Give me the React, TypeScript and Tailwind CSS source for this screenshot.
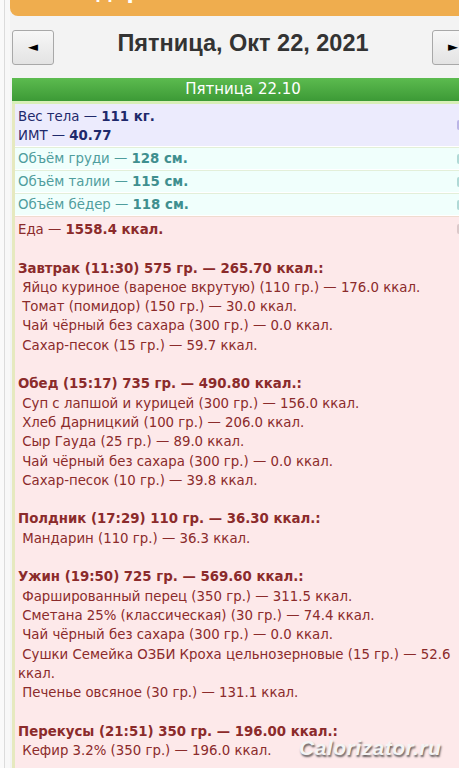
import React from "react";

type Meal = { title: string; items: string[] };

const meals: Meal[] = [
  {
    title: "Завтрак (11:30) 575 гр. — 265.70 ккал.:",
    items: [
      "Яйцо куриное (вареное вкрутую) (110 гр.) — 176.0 ккал.",
      "Томат (помидор) (150 гр.) — 30.0 ккал.",
      "Чай чёрный без сахара (300 гр.) — 0.0 ккал.",
      "Сахар-песок (15 гр.) — 59.7 ккал.",
    ],
  },
  {
    title: "Обед (15:17) 735 гр. — 490.80 ккал.:",
    items: [
      "Суп с лапшой и курицей (300 гр.) — 156.0 ккал.",
      "Хлеб Дарницкий (100 гр.) — 206.0 ккал.",
      "Сыр Гауда (25 гр.) — 89.0 ккал.",
      "Чай чёрный без сахара (300 гр.) — 0.0 ккал.",
      "Сахар-песок (10 гр.) — 39.8 ккал.",
    ],
  },
  {
    title: "Полдник (17:29) 110 гр. — 36.30 ккал.:",
    items: ["Мандарин (110 гр.) — 36.3 ккал."],
  },
  {
    title: "Ужин (19:50) 725 гр. — 569.60 ккал.:",
    items: [
      "Фаршированный перец (350 гр.) — 311.5 ккал.",
      "Сметана 25% (классическая) (30 гр.) — 74.4 ккал.",
      "Чай чёрный без сахара (300 гр.) — 0.0 ккал.",
      "Сушки Семейка ОЗБИ Кроха цельнозерновые (15 гр.) — 52.6 ккал.",
      "Печенье овсяное (30 гр.) — 131.1 ккал.",
    ],
  },
  {
    title: "Перекусы (21:51) 350 гр. — 196.00 ккал.:",
    items: ["Кефир 3.2% (350 гр.) — 196.0 ккал."],
  },
];

const measures = [
  ["Объём груди", "128 см."],
  ["Объём талии", "115 см."],
  ["Объём бёдер", "118 см."],
];

function EditIcon({ color }: { color: string }) {
  return (
    <svg width="12" height="12" viewBox="0 0 12 12" className="shrink-0">
      <rect x="1" y="1" width="10" height="10" rx="2" fill={color} opacity="0.5" />
    </svg>
  );
}

export default function App() {
  return (
    <div className="w-[459px] min-h-screen overflow-hidden bg-[#f3f3f3] flex font-['DejaVu_Sans',Verdana,sans-serif]">
      <div className="w-[4px] shrink-0 bg-[#fafafa]" />
      <div className="w-px shrink-0 bg-[#dcdcdc]" />
      <div className="w-[5px] shrink-0 bg-[#f8f8f8]" />
      <div className="w-[464px] shrink-0">
        <div className="h-4 bg-[#efad4e] rounded-bl-[8px] overflow-hidden pl-[10px]">
          <div className="-mt-[20px] text-[21px] font-bold text-white leading-[24px]">Календарь</div>
        </div>

        <div className="pl-[2px]">
          <div className="flex items-center justify-between h-[62px]">
            <button className="w-[42px] h-[35px] rounded-[3px] border border-[#a8a8a8] bg-gradient-to-b from-[#f7f7f7] to-[#e3e3e3] flex items-center justify-center text-[13px] text-black">
              ◄
            </button>
            <div className="-mt-[6px] font-['Liberation_Sans',Arial,sans-serif] font-bold text-[23.5px] text-[#333]">
              Пятница, Окт 22, 2021
            </div>
            <button className="w-[42px] h-[35px] rounded-[3px] border border-[#a8a8a8] bg-gradient-to-b from-[#f7f7f7] to-[#e3e3e3] flex items-center justify-center text-[13px] text-black">
              ►
            </button>
          </div>

          <div className="h-[23px] bg-gradient-to-b from-[#5cbb4f] to-[#3c9a36] text-white text-[15px] flex items-center justify-center border-b-[3px] border-[#d8efb8] box-content">
            Пятница 22.10
          </div>

          <div className="border-l-[3px] border-[#e6e9bf] bg-white flex flex-col gap-px font-['DejaVu_Sans_Condensed','DejaVu_Sans',sans-serif] font-stretch-condensed">
            <div className="bg-[#ecebfd] text-[#1f296b] text-[14.8px] leading-[19px] pl-[3px] pr-[6px] py-[2px] flex justify-between items-center">
              <div>
                <div>
                  Вес тела — <b>111 кг.</b>
                </div>
                <div>
                  ИМТ — <b>40.77</b>
                </div>
              </div>
              <EditIcon color="#8a7fd0" />
            </div>

            {measures.map(([label, value]) => (
              <div
                key={label}
                className="bg-[#f0fffc] text-[#4f9d9d] text-[14.8px] h-[22px] pl-[3px] pr-[6px] flex justify-between items-center border-t border-[#e3efd9]"
              >
                <div>
                  {label} — <b className="text-[#3f8f8f]">{value}</b>
                </div>
                <EditIcon color="#6fb4b0" />
              </div>
            ))}

            <div className="relative bg-[#fde9ea] text-[#8b2b2b] text-[14.8px] leading-[19.3px] pl-[3px] pr-[6px] pt-[2px] pb-8 border-t border-[#f0dcd0]">
              <div className="flex justify-between items-center">
                <div>
                  Еда — <b>1558.4 ккал.</b>
                </div>
                <EditIcon color="#b9a8a8" />
              </div>
              <div className="w-[440px]">
                {meals.map((meal) => (
                  <div key={meal.title} className="mt-[19.3px]">
                    <div className="font-bold">{meal.title}</div>
                    {meal.items.map((item, i) => (
                      <div key={i}>{"\u00a0" + item}</div>
                    ))}
                  </div>
                ))}
              </div>
              <div className="absolute left-[284px] top-[521px] text-[21px] font-bold italic text-[#f4f4f4] font-['Liberation_Sans',Arial,sans-serif] [text-shadow:1px_2px_2px_rgba(0,0,0,0.6)] tracking-[0.5px]">
                Calorizator.ru
              </div>
            </div>
          </div>
        </div>
      </div>
    </div>
  );
}
